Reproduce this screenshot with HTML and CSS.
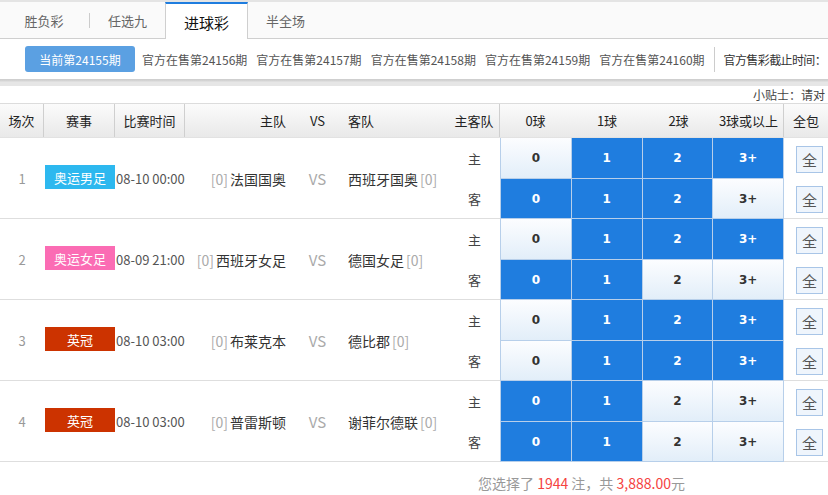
FILE: index.html
```html
<!DOCTYPE html>
<html lang="zh-CN">
<head>
<meta charset="utf-8">
<title>进球彩</title>
<link rel="stylesheet" href="styles.css">
</head>
<body>
<div class="page">
  <div class="topstrip"></div>
  <div class="tabs">
    <div class="tab tab-sep">胜负彩</div>
    <div class="tab">任选九</div>
    <div class="tab active">进球彩</div>
    <div class="tab">半全场</div>
  </div>
  <div class="periods">
    <span class="cur">当前第24155期</span>
    <span class="per">官方在售第24156期</span>
    <span class="per">官方在售第24157期</span>
    <span class="per">官方在售第24158期</span>
    <span class="per">官方在售第24159期</span>
    <span class="per">官方在售第24160期</span>
    <span class="vsep"></span>
    <span class="deadline">官方售彩截止时间：</span>
  </div>
  <div class="shade"></div>
  <div class="tip">小贴士：请对</div>

  <div class="thead">
    <div class="th sep">场次</div>
    <div class="th sep">赛事</div>
    <div class="th sep">比赛时间</div>
    <div class="th home">主队</div>
    <div class="th">VS</div>
    <div class="th away">客队</div>
    <div class="th sep">主客队</div>
    <div class="th">0球</div>
    <div class="th">1球</div>
    <div class="th">2球</div>
    <div class="th sep">3球或以上</div>
    <div class="th">全包</div>
  </div>

  <div class="match">
    <div class="no">1</div>
    <div class="lg"><span class="badge b-men">奥运男足</span></div>
    <div class="time">08-10 00:00</div>
    <div class="home"><span class="rk">[0]</span> 法国国奥</div>
    <div class="vs">VS</div>
    <div class="away">西班牙国奥 <span class="rk">[0]</span></div>
    <div class="side"><span>主</span><span>客</span></div>
    <div class="balls">
      <span class="ball">0</span><span class="ball on">1</span><span class="ball on">2</span><span class="ball on">3+</span>
      <span class="ball on">0</span><span class="ball on">1</span><span class="ball on">2</span><span class="ball">3+</span>
    </div>
    <div class="all"><span class="allbtn">全</span><span class="allbtn">全</span></div>
  </div>

  <div class="match">
    <div class="no">2</div>
    <div class="lg"><span class="badge b-women">奥运女足</span></div>
    <div class="time">08-09 21:00</div>
    <div class="home"><span class="rk">[0]</span> 西班牙女足</div>
    <div class="vs">VS</div>
    <div class="away">德国女足 <span class="rk">[0]</span></div>
    <div class="side"><span>主</span><span>客</span></div>
    <div class="balls">
      <span class="ball">0</span><span class="ball on">1</span><span class="ball on">2</span><span class="ball on">3+</span>
      <span class="ball on">0</span><span class="ball on">1</span><span class="ball">2</span><span class="ball">3+</span>
    </div>
    <div class="all"><span class="allbtn">全</span><span class="allbtn">全</span></div>
  </div>

  <div class="match">
    <div class="no">3</div>
    <div class="lg"><span class="badge b-ec">英冠</span></div>
    <div class="time">08-10 03:00</div>
    <div class="home"><span class="rk">[0]</span> 布莱克本</div>
    <div class="vs">VS</div>
    <div class="away">德比郡 <span class="rk">[0]</span></div>
    <div class="side"><span>主</span><span>客</span></div>
    <div class="balls">
      <span class="ball">0</span><span class="ball on">1</span><span class="ball on">2</span><span class="ball on">3+</span>
      <span class="ball">0</span><span class="ball on">1</span><span class="ball on">2</span><span class="ball on">3+</span>
    </div>
    <div class="all"><span class="allbtn">全</span><span class="allbtn">全</span></div>
  </div>

  <div class="match">
    <div class="no">4</div>
    <div class="lg"><span class="badge b-ec">英冠</span></div>
    <div class="time">08-10 03:00</div>
    <div class="home"><span class="rk">[0]</span> 普雷斯顿</div>
    <div class="vs">VS</div>
    <div class="away">谢菲尔德联 <span class="rk">[0]</span></div>
    <div class="side"><span>主</span><span>客</span></div>
    <div class="balls">
      <span class="ball on">0</span><span class="ball on">1</span><span class="ball">2</span><span class="ball">3+</span>
      <span class="ball on">0</span><span class="ball on">1</span><span class="ball">2</span><span class="ball">3+</span>
    </div>
    <div class="all"><span class="allbtn">全</span><span class="allbtn">全</span></div>
  </div>

  <div class="footer">您选择了 <em>1944</em> 注，共 <em>3,888.00</em>元</div>
</div>
</body>
</html>
```

FILE: styles.css
```css
html, body {
  margin: 0;
  padding: 0;
  background: #fff;
}
body {
  font-family: "Noto Sans CJK SC", "Noto Sans", sans-serif;
  color: #333;
  overflow: hidden;
}
.page {
  width: 828px;
  overflow: hidden;
}
.topstrip {
  height: 2px;
  background: #e4e4e4;
}
.tabs {
  display: flex;
  height: 36px;
  background: #fafafa;
  border-bottom: 1px solid #cfcfcf;
}
.tab {
  position: relative;
  display: flex;
  align-items: center;
  justify-content: center;
  font-size: 13px;
  color: #666;
  width: 75px;
}
.tab:first-child {
  width: 88px;
  padding-right: 2px;
}
.tab-sep::after {
  content: "";
  position: absolute;
  right: 0;
  top: 11px;
  height: 15px;
  border-right: 1px solid #ccc;
}
.tab.active {
  width: 83px;
  background: #fff;
  color: #111;
  font-size: 15px;
  border-top: 2px solid #1f7ddf;
  border-left: 1px solid #cfcfcf;
  border-right: 1px solid #cfcfcf;
  margin-bottom: -1px;
  padding-top: 1px;
  box-sizing: border-box;
  height: 37px;
}
.periods {
  display: flex;
  align-items: center;
  height: 40px;
  padding-left: 25px;
  white-space: nowrap;
  font-size: 12px;
  color: #555;
  overflow: hidden;
}
.periods > span {
  flex-shrink: 0;
}
.cur {
  display: inline-flex;
  align-items: center;
  justify-content: center;
  width: 110px;
  height: 26px;
  background: #5ba0e2;
  color: #fff;
  border-radius: 3px;
  margin-right: 7px;
}
.per {
  margin-right: 9px;
}
.vsep {
  display: inline-block;
  width: 1px;
  height: 25px;
  background: #ccc;
  margin: 0 9px 0 0;
}
.deadline {
  color: #333;
  letter-spacing: -0.6px;
}
.shade {
  height: 7px;
  background: linear-gradient(#cdcdcd 0, #d6d6d6 2px, #e6e6e6 3px, #e6e6e6 100%);
}
.tip {
  height: 17px;
  line-height: 17px;
  font-size: 12px;
  color: #444;
  padding-left: 753px;
  white-space: nowrap;
  overflow: hidden;
}
.thead {
  display: grid;
  grid-template-columns: 44px 71px 70px 115px 35px 114px 51px 71px 72px 71px 70px 44px;
  height: 35px;
  box-sizing: border-box;
  border-top: 1px solid #dcdcdc;
  border-bottom: 1px solid #e2e2e2;
  background: linear-gradient(#fbfbfb, #e9e9e9);
}
.th {
  display: flex;
  align-items: center;
  justify-content: center;
  font-size: 13px;
  color: #222;
}
.th.sep {
  border-right: 1px solid #cfcfcf;
}
.th.home {
  justify-content: flex-end;
  padding-right: 14px;
}
.th.away {
  justify-content: flex-start;
  padding-left: 13px;
}
.match {
  display: grid;
  grid-template-columns: 44px 71px 70px 115px 35px 114px 51px 284px 44px;
  height: 81px;
  box-sizing: border-box;
  border-bottom: 1px solid #dedede;
}
.match > div {
  display: flex;
  align-items: center;
}
.no {
  justify-content: center;
  font-size: 13px;
  color: #999;
}
.lg {
  justify-content: flex-end;
  padding-bottom: 3px;
}
.badge {
  display: flex;
  align-items: center;
  justify-content: center;
  width: 70px;
  height: 24px;
  font-size: 13px;
  color: #fff;
}
.b-men { background: #2db8ef; }
.b-women { background: #fb6cb4; }
.b-ec { background: #cc3300; }
.time {
  font-size: 13px;
  color: #555;
  padding-left: 1px;
}
.match .home {
  justify-content: flex-end;
  padding-right: 14px;
  font-size: 14px;
  color: #333;
  white-space: nowrap;
}
.match .away {
  justify-content: flex-start;
  padding-left: 13px;
  font-size: 14px;
  color: #333;
  white-space: nowrap;
}
.rk {
  color: #aaa;
  margin: 0 2px;
}
.vs {
  justify-content: center;
  font-size: 15px;
  color: #aaa;
}
.match .side {
  flex-direction: column;
  align-items: stretch;
}
.side span {
  flex: 1;
  display: flex;
  align-items: center;
  justify-content: center;
  font-size: 13px;
  color: #444;
}
.match .balls {
  display: grid;
  grid-template-columns: repeat(4, 1fr);
  grid-template-rows: 40px 39px;
  align-items: stretch;
  gap: 1px;
  padding: 0 1px 1px;
  box-sizing: border-box;
  height: 81px;
  align-self: start;
  background: #b7cfea;
}
.ball {
  display: flex;
  align-items: center;
  justify-content: center;
  font-family: "DejaVu Sans", sans-serif;
  font-weight: bold;
  font-size: 12px;
  color: #333;
  background: linear-gradient(#fcfdff, #e2eef9);
}
.ball.on {
  background: #1f7ddf;
  color: #fff;
}
.match .all {
  flex-direction: column;
  align-items: flex-start;
  padding: 8px 0 0 12px;
  gap: 13px;
}
.allbtn {
  display: flex;
  align-items: center;
  justify-content: center;
  width: 27px;
  height: 27px;
  box-sizing: border-box;
  border: 1px solid #a8c5e7;
  background: #eff5fc;
  font-size: 15px;
  color: #555;
}
.footer {
  height: 33px;
  line-height: 42px;
  padding-left: 478px;
  font-size: 14px;
  color: #999;
  white-space: nowrap;
}
.footer em {
  font-style: normal;
  color: #f5433f;
}
```
